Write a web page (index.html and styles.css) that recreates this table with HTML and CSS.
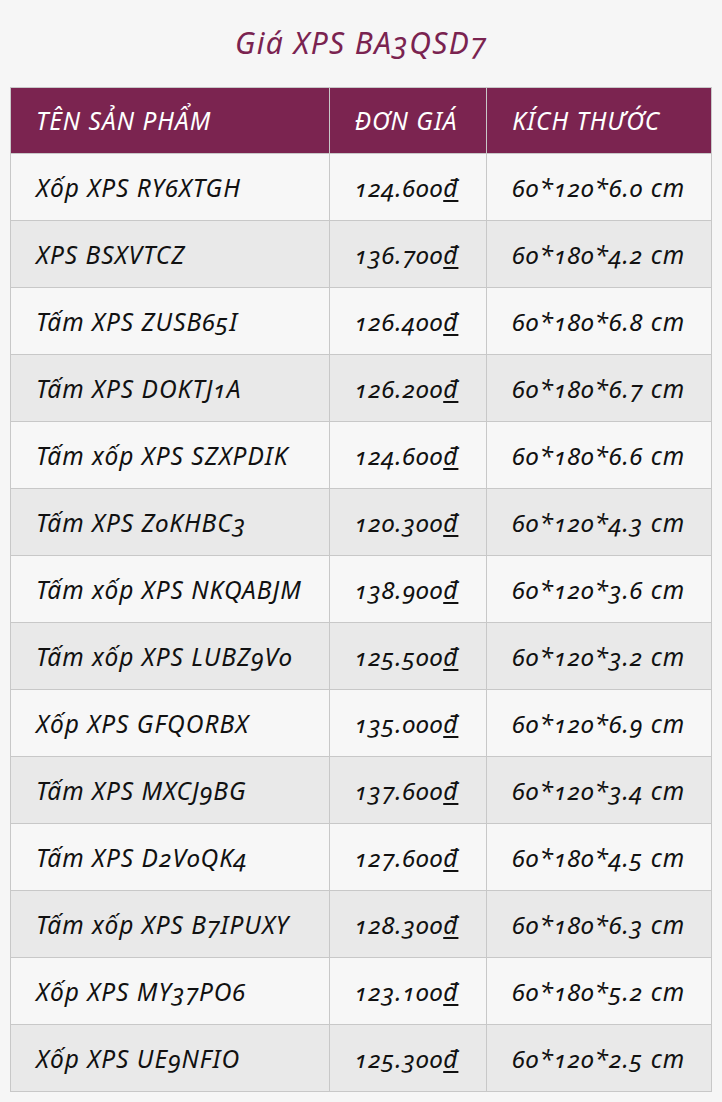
FILE: index.html
```html
<!DOCTYPE html>
<html lang="vi">
<head>
<meta charset="utf-8">
<title>Giá XPS BA3QSD7</title>
<link rel="stylesheet" href="styles.css">
</head>
<body>
<div class="page">
  <h2 class="title">Giá XPS BA3QSD7</h2>
  <table class="price-table">
    <thead>
      <tr><th class="c1">TÊN SẢN PHẨM</th><th class="c2">ĐƠN GIÁ</th><th class="c3">KÍCH THƯỚC</th></tr>
    </thead>
    <tbody>
      <tr><td>Xốp XPS RY6XTGH</td><td>124.600<u>đ</u></td><td>60*120*6.0 cm</td></tr>
      <tr><td>XPS BSXVTCZ</td><td>136.700<u>đ</u></td><td>60*180*4.2 cm</td></tr>
      <tr><td>Tấm XPS ZUSB65I</td><td>126.400<u>đ</u></td><td>60*180*6.8 cm</td></tr>
      <tr><td>Tấm XPS DOKTJ1A</td><td>126.200<u>đ</u></td><td>60*180*6.7 cm</td></tr>
      <tr><td>Tấm xốp XPS SZXPDIK</td><td>124.600<u>đ</u></td><td>60*180*6.6 cm</td></tr>
      <tr><td>Tấm XPS Z0KHBC3</td><td>120.300<u>đ</u></td><td>60*120*4.3 cm</td></tr>
      <tr><td>Tấm xốp XPS NKQABJM</td><td>138.900<u>đ</u></td><td>60*120*3.6 cm</td></tr>
      <tr><td>Tấm xốp XPS LUBZ9V0</td><td>125.500<u>đ</u></td><td>60*120*3.2 cm</td></tr>
      <tr><td>Xốp XPS GFQORBX</td><td>135.000<u>đ</u></td><td>60*120*6.9 cm</td></tr>
      <tr><td>Tấm XPS MXCJ9BG</td><td>137.600<u>đ</u></td><td>60*120*3.4 cm</td></tr>
      <tr><td>Tấm XPS D2V0QK4</td><td>127.600<u>đ</u></td><td>60*180*4.5 cm</td></tr>
      <tr><td>Tấm xốp XPS B7IPUXY</td><td>128.300<u>đ</u></td><td>60*180*6.3 cm</td></tr>
      <tr><td>Xốp XPS MY37PO6</td><td>123.100<u>đ</u></td><td>60*180*5.2 cm</td></tr>
      <tr><td>Xốp XPS UE9NFIO</td><td>125.300<u>đ</u></td><td>60*120*2.5 cm</td></tr>
    </tbody>
  </table>
</div>
</body>
</html>
```
FILE: styles.css
```css
html, body {
  margin: 0;
  padding: 0;
  background: #f6f6f6;
}
.page {
  padding: 0 10px 10px 10px;
  font-family: "Noto Sans", "Open Sans", sans-serif;
  font-style: italic;
  font-variant-numeric: oldstyle-nums;
  color: #111;
}
.title {
  margin: 0;
  padding-top: 25px;
  height: 87px;
  box-sizing: border-box;
  text-align: center;
  font-size: 30px;
  font-weight: normal;
  line-height: 36px;
  letter-spacing: 1.4px;
  color: #7a2350;
}
.price-table {
  width: 702px;
  border-collapse: collapse;
  font-size: 24.5px;
  letter-spacing: 1px;
}
.price-table th,
.price-table td {
  border: 1px solid #c8c8c8;
  text-align: left;
  padding: 0 0 0 25px;
  height: 67px;
  box-sizing: border-box;
  font-weight: normal;
  white-space: nowrap;
}
.price-table th {
  height: 66px;
  background: #7b2450;
  color: #fff;
}
.c1 { width: 319px; }
.c2 { width: 158px; }
.c3 { width: 225px; }
.price-table tbody tr:nth-child(odd) td { background: #f7f7f7; }
.price-table tbody tr:nth-child(even) td { background: #e9e9e9; }
.price-table u {
  text-decoration-thickness: 2px;
  text-underline-offset: 3px;
}
```
